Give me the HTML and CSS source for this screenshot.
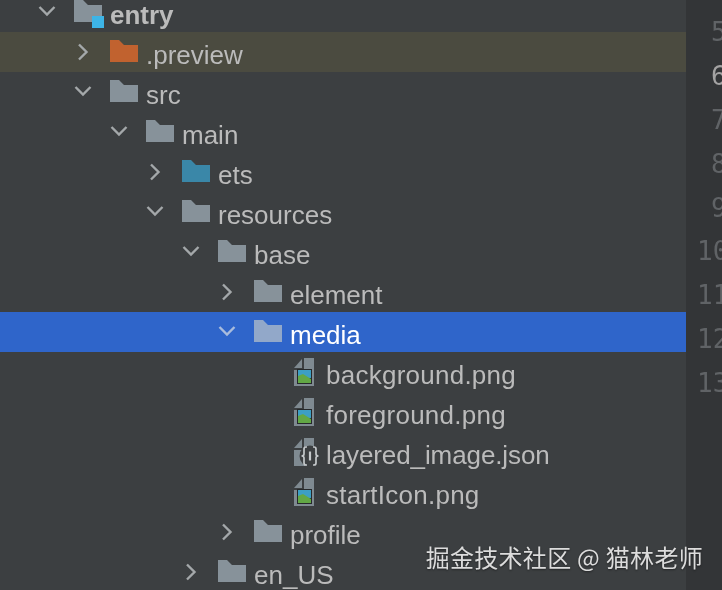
FILE: index.html
```html
<!DOCTYPE html>
<html lang="en">
<head>
<meta charset="utf-8">
<title>Project tree</title>
<link rel="stylesheet" href="styles.css">
</head>
<body>
<svg class="defs" width="0" height="0" aria-hidden="true">
  <defs>
    <symbol id="down" viewBox="0 0 18 12"><path d="M1.5 2 L9 9.5 L16.5 2" fill="none" stroke="currentColor" stroke-width="2.4"/></symbol>
    <symbol id="right" viewBox="0 0 12 18"><path d="M2 1.5 L9.5 9 L2 16.500" fill="none" stroke="currentColor" stroke-width="2.4"/></symbol>
    <symbol id="folder" viewBox="0 0 28 22"><path d="M0 0 H9 L14 5 H28 V22 H0 Z" fill="currentColor"/></symbol>
    <symbol id="image" viewBox="0 0 20 28">
      <path d="M0 10 L8 1 V10 Z" fill="#7f8a91"/>
      <path d="M10 0 H20 V28 H0 V12 H10 Z" fill="#7f8a91"/>
      <rect x="3" y="11" width="15" height="15" fill="#26292b"/>
      <rect x="4" y="12" width="13" height="8" fill="#3c9fc4"/>
      <path d="M4 18 L9 16 L17 21 V25 H4 Z" fill="#62a845"/>
    </symbol>
    <symbol id="json" viewBox="0 0 26 28">
      <path d="M0 10 L8 1 V10 Z" fill="#7f8a91"/>
      <path d="M10 0 H20 V28 H0 V12 H10 Z" fill="#7f8a91"/>
      <circle cx="16" cy="18" r="10.500" fill="#3c3f41"/>
      <path d="M13 9 H12 Q10 9 10 11 V16 Q10 18 7.500 18 Q10 18 10 20 V25 Q10 27 12 27 H13 M19 9 H20 Q22 9 22 11 V16 Q22 18 24.500 18 Q22 18 22 20 V25 Q22 27 20 27 H19" fill="none" stroke="#c4c8ca" stroke-width="1.7"/>
      <path d="M16 13.500 V22.500" stroke="#c4c8ca" stroke-width="2.2"/>
    </symbol>
  </defs>
</svg>
<div class="window">
  <main class="tree">
    <div class="row d0"><svg class="chev down"><use href="#down"/></svg><span class="entry-icon"><svg class="folder"><use href="#folder"/></svg><i class="module"></i></span><span class="name bold">entry</span></div>
    <div class="row d1 excluded"><svg class="chev right"><use href="#right"/></svg><svg class="folder orange"><use href="#folder"/></svg><span class="name">.preview</span></div>
    <div class="row d1"><svg class="chev down"><use href="#down"/></svg><svg class="folder"><use href="#folder"/></svg><span class="name">src</span></div>
    <div class="row d2"><svg class="chev down"><use href="#down"/></svg><svg class="folder"><use href="#folder"/></svg><span class="name">main</span></div>
    <div class="row d3"><svg class="chev right"><use href="#right"/></svg><svg class="folder blue"><use href="#folder"/></svg><span class="name">ets</span></div>
    <div class="row d3"><svg class="chev down"><use href="#down"/></svg><svg class="folder"><use href="#folder"/></svg><span class="name">resources</span></div>
    <div class="row d4"><svg class="chev down"><use href="#down"/></svg><svg class="folder"><use href="#folder"/></svg><span class="name">base</span></div>
    <div class="row d5"><svg class="chev right"><use href="#right"/></svg><svg class="folder"><use href="#folder"/></svg><span class="name">element</span></div>
    <div class="row d5 selected"><svg class="chev down"><use href="#down"/></svg><svg class="folder"><use href="#folder"/></svg><span class="name">media</span></div>
    <div class="row file"><svg class="file-icon"><use href="#image"/></svg><span class="name loose">background.png</span></div>
    <div class="row file"><svg class="file-icon"><use href="#image"/></svg><span class="name loose">foreground.png</span></div>
    <div class="row file"><svg class="file-icon wide"><use href="#json"/></svg><span class="name tight">layered_image.json</span></div>
    <div class="row file"><svg class="file-icon"><use href="#image"/></svg><span class="name loose">startIcon.png</span></div>
    <div class="row d5"><svg class="chev right"><use href="#right"/></svg><svg class="folder"><use href="#folder"/></svg><span class="name">profile</span></div>
    <div class="row d4"><svg class="chev right"><use href="#right"/></svg><svg class="folder"><use href="#folder"/></svg><span class="name">en_US</span></div>
  </main>
  <aside class="gutter">
    <div class="ln">5</div>
    <div class="ln current">6</div>
    <div class="ln">7</div>
    <div class="ln">8</div>
    <div class="ln">9</div>
    <div class="ln">10</div>
    <div class="ln">11</div>
    <div class="ln">12</div>
    <div class="ln">13</div>
  </aside>
  <div class="watermark">掘金技术社区 @ 猫林老师</div>
</div>
</body>
</html>
```

FILE: styles.css
```css
html, body {
  margin: 0;
  padding: 0;
  height: 100%;
  overflow: hidden;
  background: #3c3f41;
}

.defs {
  position: absolute;
}

.window {
  position: relative;
  display: flex;
  width: 722px;
  height: 590px;
  overflow: hidden;
  font-family: "Liberation Sans", Arial, sans-serif;
  filter: blur(0.35px);
}

.tree {
  flex: 0 0 686px;
  margin-top: -8px;
  background: #3c3f41;
}

.row {
  display: flex;
  align-items: center;
  height: 40px;
  color: #bbbbbb;
  font-size: 26px;
}

.d0 { padding-left: 38px; }
.d1 { padding-left: 74px; }
.d2 { padding-left: 110px; }
.d3 { padding-left: 146px; }
.d4 { padding-left: 182px; }
.d5 { padding-left: 218px; }
.file { padding-left: 294px; }

.excluded { background: #4b4b40; }

.selected {
  background: #2f65ca;
  color: #ffffff;
}

.chev {
  flex: none;
  color: #a4a8aa;
}

.chev.down {
  width: 18px;
  height: 12px;
  margin: -3px 18px 0 0;
}

.chev.right {
  width: 12px;
  height: 18px;
  margin: 0 21px 0 3px;
}

.selected .chev { color: #a9bcdd; }

.folder {
  flex: none;
  width: 28px;
  height: 22px;
  margin-top: -2px;
  color: #87929a;
}

.folder.orange { color: #c1622f; }
.folder.blue { color: #3a87a8; }
.selected .folder { color: #92a8c9; }

.entry-icon {
  position: relative;
  display: flex;
  flex: none;
  margin-top: -2px;
}

.entry-icon .folder { margin: 0; }

.module {
  position: absolute;
  left: 18px;
  top: 16px;
  width: 12px;
  height: 12px;
  background: #3db4e6;
}

.name {
  margin: 6px 0 0 8px;
  line-height: 40px;
  white-space: nowrap;
}

.bold {
  font-weight: 700;
}

.loose { letter-spacing: 0.25px; }
.tight { letter-spacing: -0.1px; }

.file-icon {
  flex: none;
  width: 20px;
  height: 28px;
  margin-right: 4px;
}

.file-icon.wide {
  width: 26px;
  margin-right: -2px;
}

.gutter {
  flex: 1;
  padding-top: 10px;
  background: #333537;
  color: #606366;
  font-family: "DejaVu Sans Mono", monospace;
  font-size: 26px;
  overflow: hidden;
}

.ln {
  height: 43.9px;
  line-height: 44px;
  white-space: nowrap;
  padding-left: 25px;
}

.ln.current { color: #a4a3a3; }

.ln:nth-child(n+6) { padding-left: 11px; }

.watermark {
  position: absolute;
  right: 19px;
  bottom: 17px;
  color: #dcdcdc;
  font-family: "Noto Sans CJK SC", sans-serif;
  font-size: 24px;
  line-height: 32px;
  letter-spacing: 0.3px;
  white-space: nowrap;
  text-shadow: 0 1px 2px rgba(0, 0, 0, 0.45);
}
```
